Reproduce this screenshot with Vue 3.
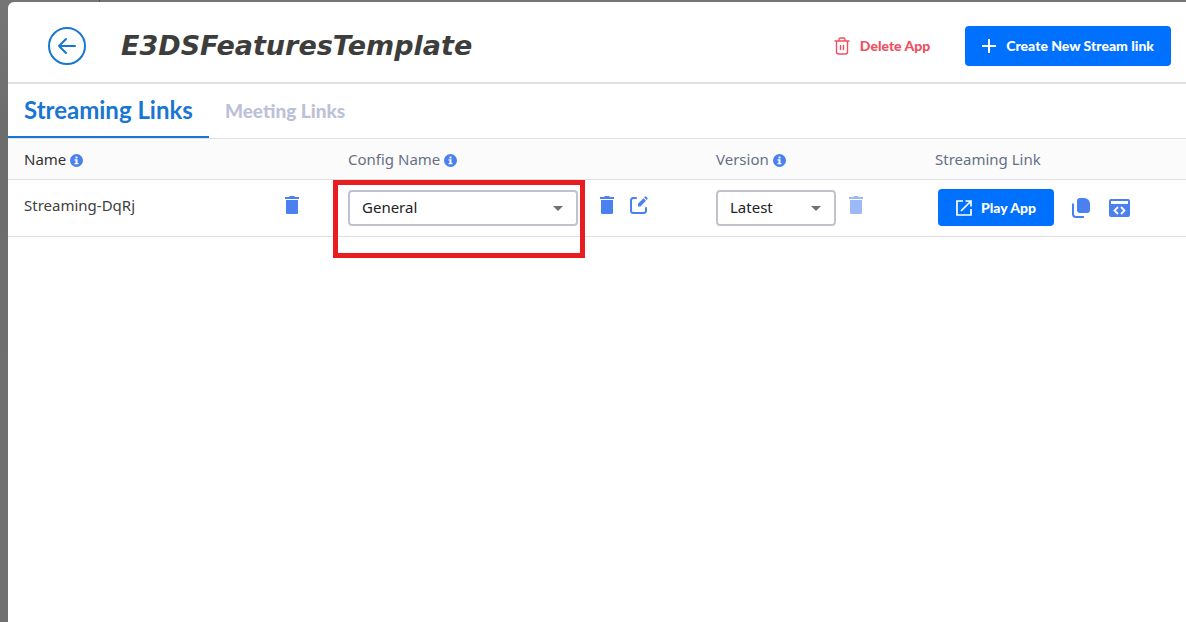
<script setup>
import { ref } from 'vue'

const config = ref('General')
const version = ref('Latest')
const tab = ref('streaming')
const trashPath = 'M2 4H14V17Q14 18 13 18H3Q2 18 2 17ZM1 1H5L6 0H10L11 1H15V3H1Z'
const infoPath = 'M6.5 0a6.5 6.5 0 1 0 0 13a6.5 6.5 0 0 0 0-13zM5.5 2.5h2v2h-2zM4.5 5.3h3v3.7h1v1.3h-4V9h1V6.6h-1z'
</script>

<template>
  <div class="backdrop">
    <main class="dialog">
      <header class="top">
        <button class="back" aria-label="Back">
          <svg width="38" height="38" viewBox="0 0 38 38" fill="none" stroke="#1976d2" stroke-width="2" stroke-linecap="round" stroke-linejoin="round">
            <circle cx="19" cy="19" r="18" />
            <path d="M27 19H11M18 12L11 19L18 26" />
          </svg>
        </button>
        <h1>E3DSFeaturesTemplate</h1>
        <button class="delete">
          <svg width="16" height="18" viewBox="0 0 16 18" fill="none" stroke="currentColor" stroke-width="1.4" stroke-linecap="round" stroke-linejoin="round">
            <path d="M1 4H15M2.5 4V15Q2.5 17 4.500 17H11.500Q13.500 17 13.500 15V4M5 4V2.500Q5 1 6.500 1H9.500Q11 1 11 2.500V4M6.500 8.500V12.500M9.500 8.500V12.500" />
          </svg>
          Delete App
        </button>
        <button class="primary create">
          <svg width="14" height="14" viewBox="0 0 14 14" stroke="#fff" stroke-width="2"><path d="M7 0V14M0 7H14" /></svg>
          Create New Stream link
        </button>
      </header>

      <nav class="tabs">
        <button :class="{ active: tab === 'streaming' }" @click="tab = 'streaming'">Streaming Links</button>
        <button :class="{ active: tab === 'meeting' }" @click="tab = 'meeting'">Meeting Links</button>
      </nav>

      <table>
        <colgroup><col class="c-name" /><col class="c-config" /><col class="c-version" /><col /></colgroup>
        <thead>
          <tr>
            <th class="dark">Name <svg class="info" viewBox="0 0 13 13"><path :d="infoPath" fill-rule="evenodd" /></svg></th>
            <th>Config Name <svg class="info" viewBox="0 0 13 13"><path :d="infoPath" fill-rule="evenodd" /></svg></th>
            <th>Version <svg class="info" viewBox="0 0 13 13"><path :d="infoPath" fill-rule="evenodd" /></svg></th>
            <th>Streaming Link</th>
          </tr>
        </thead>
        <tbody>
          <tr>
            <td>
              <div class="cell name-cell">
                <span>Streaming-DqRj</span>
                <button class="icon" aria-label="Delete streaming link">
                  <svg width="16" height="18" viewBox="0 0 16 18"><path :d="trashPath" /></svg>
                </button>
              </div>
            </td>
            <td class="marked">
              <div class="cell">
                <span class="pick wide">
                  <select v-model="config" aria-label="Config Name"><option>General</option></select>
                  <svg class="caret" viewBox="0 0 10 5"><path d="M0 0H10L5 5Z" /></svg>
                </span>
                <button class="icon after-wide" aria-label="Delete config">
                  <svg width="16" height="18" viewBox="0 0 16 18"><path :d="trashPath" /></svg>
                </button>
                <button class="icon edit" aria-label="Edit config">
                  <svg width="18" height="18" viewBox="0 0 18 18">
                    <path d="M6 2H3.500Q1 2 1 4.500V14.500Q1 17 3.500 17H13.500Q16 17 16 14.500V12" fill="none" stroke="#4a80f0" stroke-width="2" stroke-linecap="round" />
                    <path d="M8 10.500V7.800L13.500 2.300L16 4.800L10.500 10.500ZM14.200 1.500L15 .6Q15.600 0 16.200 .6L17.500 1.900Q18 2.500 17.500 3.100L16.700 4Z" />
                  </svg>
                </button>
              </div>
              <div class="mark"></div>
            </td>
            <td>
              <div class="cell">
                <span class="pick narrow">
                  <select v-model="version" aria-label="Version"><option>Latest</option></select>
                  <svg class="caret" viewBox="0 0 10 5"><path d="M0 0H10L5 5Z" /></svg>
                </span>
                <button class="icon after-narrow" aria-label="Delete version" disabled>
                  <svg width="16" height="18" viewBox="0 0 16 18"><path :d="trashPath" /></svg>
                </button>
              </div>
            </td>
            <td>
              <div class="cell link-cell">
                <button class="primary play">
                  <svg width="16" height="16" viewBox="0 0 16 16" fill="none" stroke="#fff" stroke-width="1.700"><path d="M7 1H1V15H15V9M9.500 1H15V6.500M15 1L5 11" /></svg>
                  Play App
                </button>
                <button class="icon copy" aria-label="Copy link">
                  <svg width="18" height="20" viewBox="0 0 18 20">
                    <path d="M5 3Q5 0 8 0H12.500Q18 1 18 6V12Q18 15 15 15H8Q5 15 5 12Z" />
                    <path d="M1 5.500V16Q1 19 4 19H12" fill="none" stroke="#4a80f0" stroke-width="2" />
                  </svg>
                </button>
                <button class="icon embed" aria-label="Embed code">
                  <svg width="21" height="18" viewBox="0 0 21 18">
                    <path fill-rule="evenodd" d="M2 0H19Q21 0 21 2V16Q21 18 19 18H2Q0 18 0 16V2Q0 0 2 0ZM2 2V5H19V2Z" />
                    <path d="M9 8L5.500 11.500L9 15M12 8L15.500 11.500L12 15" fill="none" stroke="#fff" stroke-width="1.800" />
                  </svg>
                </button>
              </div>
            </td>
          </tr>
        </tbody>
      </table>
    </main>
  </div>
</template>

<style>
body { margin: 0; }
</style>

<style scoped>
.backdrop {
  box-sizing: border-box;
  min-height: 100vh;
  padding: 2px 0 0 8px;
  display: flex;
  background:
    linear-gradient(90deg, transparent 99px, #555 99px, #555 100px, transparent 100px),
    linear-gradient(#757575, #6d6d6d 20%, #707070);
  font-family: "Noto Sans", sans-serif;
  color: #404040;
}
.dialog { flex: 1; min-width: 0; background: #fff; border-top-left-radius: 6px; }
button { font: inherit; border: 0; padding: 0; background: none; cursor: pointer; white-space: nowrap; }
svg { display: block; flex: none; }
.top { display: flex; align-items: center; height: 82px; padding: 8px 15px 0 40px; box-sizing: border-box; border-bottom: 2px solid #e0e0e0; }
h1 { margin: 0 auto 0 35px; font: italic bold 27px/32px "DejaVu Sans", sans-serif; color: #3d3d3c; }
.delete { display: flex; align-items: center; gap: 10px; color: #f04f62; font: 900 14px/20px Lato, sans-serif; margin-right: 35px; }
.primary { display: flex; align-items: center; justify-content: center; background: #0070ff; color: #fff; border-radius: 4px; font: 900 14px/20px Lato, sans-serif; }
.create { height: 40px; padding: 0 17px; gap: 10px; }
.tabs { display: flex; height: 54px; border-bottom: 1px solid #e0e0e0; }
.tabs button { padding: 0 16px; font: 900 19px/24px Lato, sans-serif; color: #bcc1d7; }
.tabs .active { font-size: 24px; font-weight: 700; color: #1976d2; border-bottom: 2px solid #1976d2; }
table { width: 100%; table-layout: fixed; border-collapse: separate; border-spacing: 0; font-size: 15px; }
.c-name { width: 324px; }
.c-config { width: 368px; }
.c-version { width: 219px; }
th { height: 40px; padding: 0 0 0 16px; background: #fbfbfb; border-bottom: 1px solid #e0e0e0; text-align: left; font-weight: 400; color: #667085; }
.dark { color: #333; }
.info { display: inline-block; width: 13px; height: 13px; fill: #4a80f0; vertical-align: -2px; }
td { height: 56px; padding: 0 0 0 16px; border-bottom: 1px solid #e0e0e0; vertical-align: top; }
.cell { display: flex; align-items: flex-start; padding-top: 10px; }
.name-cell { justify-content: space-between; padding-right: 32px; line-height: 30px; }
.icon { fill: #4a80f0; margin-top: 6px; line-height: 0; }
.icon:disabled { opacity: .55; }
.pick { display: flex; align-items: center; position: relative; }
.wide { width: 230px; }
.narrow { width: 120px; }
select { appearance: none; width: 100%; height: 36px; box-sizing: border-box; border: 2px solid #c0c3ce; border-radius: 4px; background: #fff; padding: 0 30px 2px 12px; font: inherit; color: #222; }
.caret { position: absolute; right: 15px; width: 10px; height: 5px; fill: #707070; pointer-events: none; }
.after-wide { margin-left: 21px; }
.edit { margin-left: 15px; }
.after-narrow { margin-left: 12px; }
.marked { position: relative; }
.mark { position: absolute; top: 0; left: 1px; box-sizing: border-box; width: 252px; height: 78px; border: 5px solid #e91c1f; pointer-events: none; }
.link-cell { padding-left: 3px; padding-top: 9px; }
.play { width: 116px; height: 37px; gap: 9px; }
.copy { margin: 9px 0 0 18px; }
.embed { margin: 10px 0 0 19px; }
</style>
